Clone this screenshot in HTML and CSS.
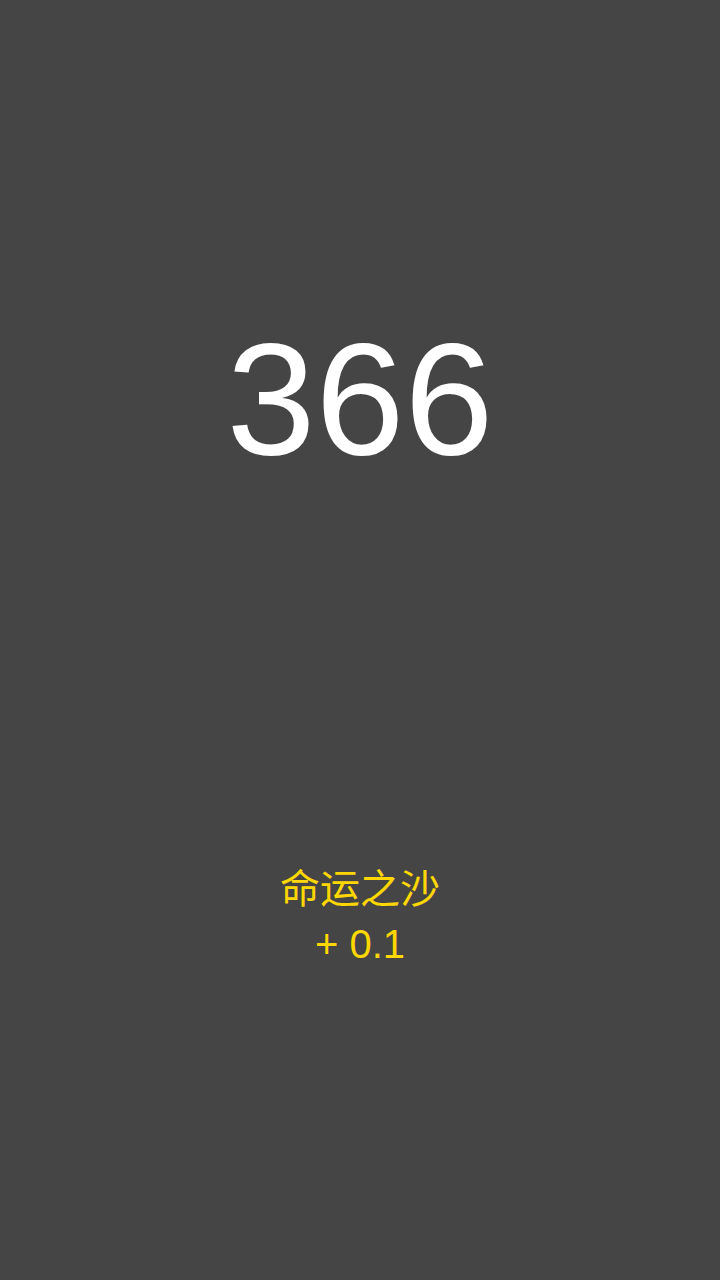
FILE: index.html
```html
<!DOCTYPE html>
<html lang="zh">
<head>
<meta charset="utf-8">
<link rel="stylesheet" href="styles.css">
</head>
<body>
<main class="screen">
  <div class="count">366</div>
  <div class="reward">
    <div class="reward-name">命运之沙</div>
    <div class="reward-value">+ 0.1</div>
  </div>
</main>
</body>
</html>
```
FILE: styles.css
```css
html, body {
  margin: 0;
  padding: 0;
  background: #454545;
}
.screen {
  width: 720px;
  height: 1280px;
  display: flex;
  flex-direction: column;
  align-items: center;
  font-family: "Liberation Sans", "Noto Sans CJK SC", sans-serif;
}
.count {
  margin-top: 307px;
  font-size: 160px;
  line-height: 184px;
  color: #ffffff;
}
.reward {
  margin-top: 371px;
  display: flex;
  flex-direction: column;
  align-items: center;
  color: #ffd700;
  font-size: 40px;
  line-height: 55px;
}
```
